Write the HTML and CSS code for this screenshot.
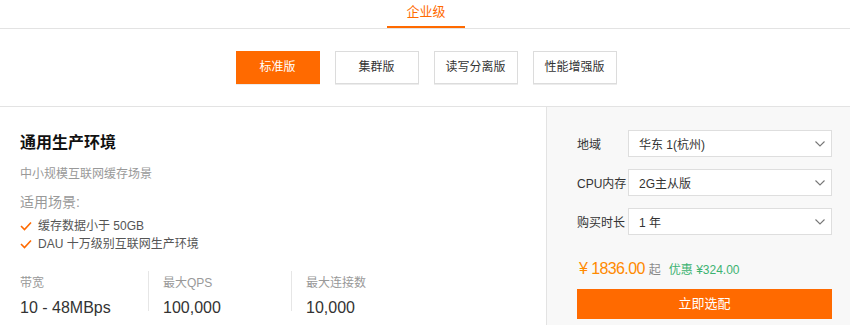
FILE: index.html
```html
<!DOCTYPE html>
<html lang="zh">
<head>
<meta charset="utf-8">
<link rel="stylesheet" href="styles.css">
</head>
<body>
<div class="tabs"><div class="tab">企业级</div></div>
<div class="versions">
  <div class="ver active">标准版</div>
  <div class="ver">集群版</div>
  <div class="ver">读写分离版</div>
  <div class="ver">性能增强版</div>
</div>
<div class="main">
  <div class="left">
    <div class="title">通用生产环境</div>
    <div class="sub">中小规模互联网缓存场景</div>
    <div class="scene">适用场景:</div>
    <ul class="checks">
      <li><svg class="ck" viewBox="0 0 12 10" width="12" height="10"><polyline points="1,5 4.5,8.5 11,1.5" fill="none" stroke="#ff6a00" stroke-width="1.6"/></svg>缓存数据小于 50GB</li>
      <li><svg class="ck" viewBox="0 0 12 10" width="12" height="10"><polyline points="1,5 4.5,8.5 11,1.5" fill="none" stroke="#ff6a00" stroke-width="1.6"/></svg>DAU 十万级别互联网生产环境</li>
    </ul>
    <div class="stats">
      <div class="stat first"><div class="lbl">带宽</div><div class="val">10 - 48MBps</div></div>
      <span class="vline"></span>
      <div class="stat"><div class="lbl">最大QPS</div><div class="val">100,000</div></div>
      <span class="vline"></span>
      <div class="stat"><div class="lbl">最大连接数</div><div class="val">10,000</div></div>
    </div>
  </div>
  <div class="right">
    <div class="row"><span class="rl">地域</span><div class="sel">华东 1(杭州)<svg class="chev" viewBox="0 0 10 6" width="10" height="6"><polyline points="0.5,0.5 5,5 9.5,0.5" fill="none" stroke="#777" stroke-width="1.1"/></svg></div></div>
    <div class="row"><span class="rl">CPU内存</span><div class="sel">2G主从版<svg class="chev" viewBox="0 0 10 6" width="10" height="6"><polyline points="0.5,0.5 5,5 9.5,0.5" fill="none" stroke="#777" stroke-width="1.1"/></svg></div></div>
    <div class="row"><span class="rl">购买时长</span><div class="sel">1 年<svg class="chev" viewBox="0 0 10 6" width="10" height="6"><polyline points="0.5,0.5 5,5 9.5,0.5" fill="none" stroke="#777" stroke-width="1.1"/></svg></div></div>
    <div class="price"><span class="amt">¥ 1836.00</span><span class="qi">起</span><span class="disc">优惠 ¥324.00</span></div>
    <div class="buy">立即选配</div>
  </div>
</div>
</body>
</html>
```

FILE: styles.css
```css
* { box-sizing: border-box; }
body {
  margin: 0;
  font-family: "Liberation Sans", "Noto Sans CJK SC", sans-serif;
  color: #333;
  background: #fff;
  width: 850px;
  height: 325px;
  overflow: hidden;
}
.tabs {
  display: flex;
  justify-content: center;
  border-bottom: 1px solid #e3e3e3;
  height: 29px;
}
.tab {
  width: 78px;
  height: 28px;
  margin-left: 2px;
  text-align: center;
  font-size: 13px;
  line-height: 24px;
  color: #ff6a00;
  border-bottom: 2px solid #ff6a00;
}
.versions {
  display: flex;
  justify-content: center;
  gap: 15px;
  padding: 22px 0 22px 2px;
  border-bottom: 1px solid #e3e3e3;
}
.ver {
  width: 84px;
  height: 33px;
  border: 1px solid #dcdcdc;
  box-shadow: 0 1px 0 #ececec;
  font-size: 12px;
  line-height: 31px;
  text-align: center;
  color: #333;
  background: #fff;
}
.ver.active {
  background: #ff6a00;
  border-color: #ff6a00;
  color: #fff;
}
.main {
  display: flex;
  height: 218px;
}
.left {
  flex: 0 0 546px;
  padding: 26px 20px 0;
}
.title {
  font-size: 16px;
  font-weight: bold;
  line-height: 20px;
  color: #111;
}
.sub {
  margin-top: 13px;
  font-size: 12px;
  line-height: 16px;
  color: #999;
}
.scene {
  margin-top: 10px;
  font-size: 14px;
  line-height: 20px;
  color: #999;
}
.checks {
  list-style: none;
  margin: 5px 0 0;
  padding: 0;
}
.checks li {
  display: flex;
  align-items: center;
  font-size: 12px;
  line-height: 18px;
  color: #555;
}
.ck { margin-right: 6px; }
.stats {
  display: flex;
  align-items: flex-start;
  margin-top: 18px;
}
.stat {
  width: 142px;
  padding-left: 14px;
  padding-top: 4px;
}
.stat.first {
  width: 128px;
  padding-left: 0;
}
.vline {
  flex: 0 0 1px;
  height: 40px;
  background: #e6e6e6;
}
.lbl {
  font-size: 12px;
  line-height: 16px;
  color: #999;
}
.val {
  margin-top: 7px;
  font-size: 16px;
  line-height: 20px;
  color: #333;
}
.right {
  flex: 1;
  background: #f8f8f8;
  border-left: 1px solid #e3e3e3;
  padding: 23px 18px 0 30px;
}
.row {
  display: flex;
  align-items: center;
  margin-bottom: 12px;
}
.rl {
  flex: 0 0 51px;
  font-size: 12px;
  color: #333;
}
.sel {
  flex: 1;
  height: 27px;
  display: flex;
  align-items: center;
  justify-content: space-between;
  padding: 0 6px 0 10px;
  background: #fff;
  border: 1px solid #dedede;
  font-size: 12px;
  color: #333;
}
.price {
  margin-top: 22px;
  line-height: 24px;
  display: flex;
  align-items: baseline;
}
.amt {
  font-size: 16px;
  letter-spacing: -0.6px;
  color: #ff8a00;
  padding-left: 2px;
}
.qi {
  font-size: 12px;
  color: #888;
  margin-left: 4px;
}
.disc {
  font-size: 12px;
  color: #3cb371;
  margin-left: 8px;
}
.buy {
  margin-top: 7px;
  height: 30px;
  background: #ff6a00;
  color: #fff;
  font-size: 13px;
  line-height: 30px;
  text-align: center;
}
```
